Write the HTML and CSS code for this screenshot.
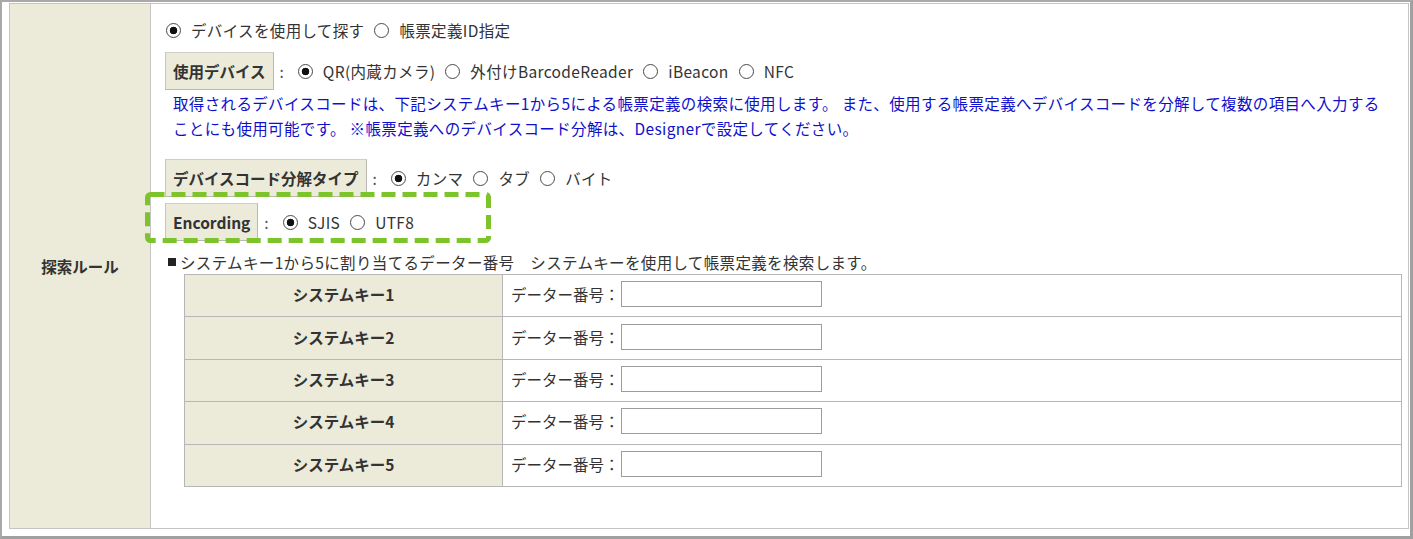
FILE: index.html
```html
<!DOCTYPE html>
<html lang="ja">
<head>
<meta charset="utf-8">
<title>探索ルール</title>
<link rel="stylesheet" href="styles.css">
</head>
<body>
<div class="frame">
  <div class="rule">
    <div class="rule-label">探索ルール</div>
    <div class="rule-body">
      <div class="line row1">
        <label class="opt"><input type="radio" name="mode" checked><span>デバイスを使用して探す</span></label>
        <label class="opt"><input type="radio" name="mode"><span>帳票定義ID指定</span></label>
      </div>
      <div class="line field f-device">
        <span class="tag">使用デバイス</span><span class="colon">:</span>
        <label class="opt"><input type="radio" name="dev" checked><span>QR(内蔵カメラ)</span></label>
        <label class="opt"><input type="radio" name="dev"><span>外付けBarcodeReader</span></label>
        <label class="opt"><input type="radio" name="dev"><span>iBeacon</span></label>
        <label class="opt"><input type="radio" name="dev"><span>NFC</span></label>
      </div>
      <p class="desc"><span class="desc-line">取得されるデバイスコードは、下記システムキー1から5による帳票定義の検索に使用します。 また、使用する帳票定義へデバイスコードを分解して複数の項目へ入力する</span><span class="desc-line">ことにも使用可能です。 ※帳票定義へのデバイスコード分解は、Designerで設定してください。</span></p>
      <div class="line field f-split">
        <span class="tag">デバイスコード分解タイプ</span><span class="colon">:</span>
        <label class="opt"><input type="radio" name="split" checked><span>カンマ</span></label>
        <label class="opt"><input type="radio" name="split"><span>タブ</span></label>
        <label class="opt"><input type="radio" name="split"><span>バイト</span></label>
      </div>
      <div class="line field f-enc">
        <span class="tag">Encording</span><span class="colon">:</span>
        <label class="opt"><input type="radio" name="enc" checked><span>SJIS</span></label>
        <label class="opt"><input type="radio" name="enc"><span>UTF8</span></label>
      </div>
      <p class="notice"><span class="sq"></span>システムキー1から5に割り当てるデーター番号　システムキーを使用して帳票定義を検索します。</p>
      <div class="keys">
        <div class="key-row"><div class="key-name">システムキー1</div><div class="key-val"><span>データー番号：</span><input class="num" type="text"></div></div>
        <div class="key-row"><div class="key-name">システムキー2</div><div class="key-val"><span>データー番号：</span><input class="num" type="text"></div></div>
        <div class="key-row"><div class="key-name">システムキー3</div><div class="key-val"><span>データー番号：</span><input class="num" type="text"></div></div>
        <div class="key-row"><div class="key-name">システムキー4</div><div class="key-val"><span>データー番号：</span><input class="num" type="text"></div></div>
        <div class="key-row"><div class="key-name">システムキー5</div><div class="key-val"><span>データー番号：</span><input class="num" type="text"></div></div>
      </div>
    </div>
  </div>
  <svg class="highlight" width="346" height="51" viewBox="0 0 346 51" aria-hidden="true">
    <rect x="2.5" y="2.5" width="341" height="46" rx="3" ry="3" fill="none" stroke="#7dc32b" stroke-width="5" stroke-dasharray="14 7"/>
  </svg>
</div>
</body>
</html>
```

FILE: styles.css
```css
* { box-sizing: border-box; }
html, body { margin: 0; padding: 0; background: #fff; }
body {
  font-family: "Noto Sans CJK JP", "Noto Sans", sans-serif;
  font-size: 15.5px;
  color: #333;
}
.frame {
  position: relative;
  width: 1413px;
  height: 539px;
  border-style: solid;
  border-color: #a9a9a9 #a0a0a0 #a0a0a0 #a9a9a9;
  border-width: 2px 3px 3px 2px;
  padding: 1px 0 0 7px;
}
.rule {
  display: flex;
  width: 1400px;
  height: 526px;
  border: 1px solid #c4c4c4;
}
.rule-label {
  width: 141px;
  flex: none;
  background: #ecead8;
  border-right: 1px solid #c4c4c4;
  display: flex;
  align-items: center;
  justify-content: center;
  font-weight: bold;
}
.rule-body {
  flex: 1;
  padding-left: 14px;
  display: flex;
  flex-direction: column;
  align-items: flex-start;
}
.line {
  display: flex;
  align-items: center;
  white-space: nowrap;
}
.row1 { margin-top: 14px; height: 24px; padding-left: 1px; }
.field { height: 38px; }
.f-device { margin-top: 10px; }
.f-split { margin-top: 18px; }
.f-enc { margin-top: 6px; }
.tag {
  height: 38px;
  padding: 0 7px;
  display: flex;
  align-items: center;
  background: #ecead8;
  border: 1px solid #b9b9b1;
  border-top-color: #cfcfc7;
  border-left-color: #c6c6be;
  font-weight: bold;
}
.colon { margin: 0 14px 0 6px; color: #555; }
.opt {
  display: inline-flex;
  align-items: center;
  gap: 10px;
  margin-right: 10px;
  letter-spacing: 0.35px;
}
.opt input[type=radio] {
  appearance: none;
  -webkit-appearance: none;
  width: 15px;
  height: 15px;
  margin: 0;
  border: 1px solid #4a4a4a;
  border-radius: 50%;
  background: #fff;
}
.opt input[type=radio]:checked {
  background: radial-gradient(circle, #111 0 3.5px, #fff 4.1px);
}
.desc {
  margin: 1px 0 0 8px;
  line-height: 25px;
  color: #1010cc;
  letter-spacing: 0.35px;
}
.desc-line { display: block; white-space: nowrap; }
.notice {
  margin: 10px 0 0 3px;
  line-height: 22px;
  white-space: nowrap;
  display: flex;
  align-items: center;
  letter-spacing: 0.35px;
}
.sq {
  display: inline-block;
  width: 8px;
  height: 8px;
  background: #222;
  margin-right: 4px;
}
.keys {
  margin: 1px 0 0 19px;
  width: 1218px;
  border: 1px solid #b6b6b6;
  border-bottom: none;
}
.key-row {
  display: flex;
  height: 42.4px;
  border-bottom: 1px solid #b6b6b6;
}
.key-name {
  width: 318px;
  flex: none;
  background: #ecead8;
  border-right: 1px solid #b6b6b6;
  display: flex;
  align-items: center;
  justify-content: center;
  font-weight: bold;
  padding-bottom: 3px;
}
.key-val {
  flex: 1;
  display: flex;
  align-items: center;
  padding-left: 8px;
  padding-bottom: 3px;
}
.num {
  width: 201px;
  height: 26px;
  margin: 0 0 0 1px;
  border: 1px solid #9c9c9c;
  background: #fff;
  font: inherit;
}
.highlight {
  position: absolute;
  left: 143px;
  top: 190px;
}
```
